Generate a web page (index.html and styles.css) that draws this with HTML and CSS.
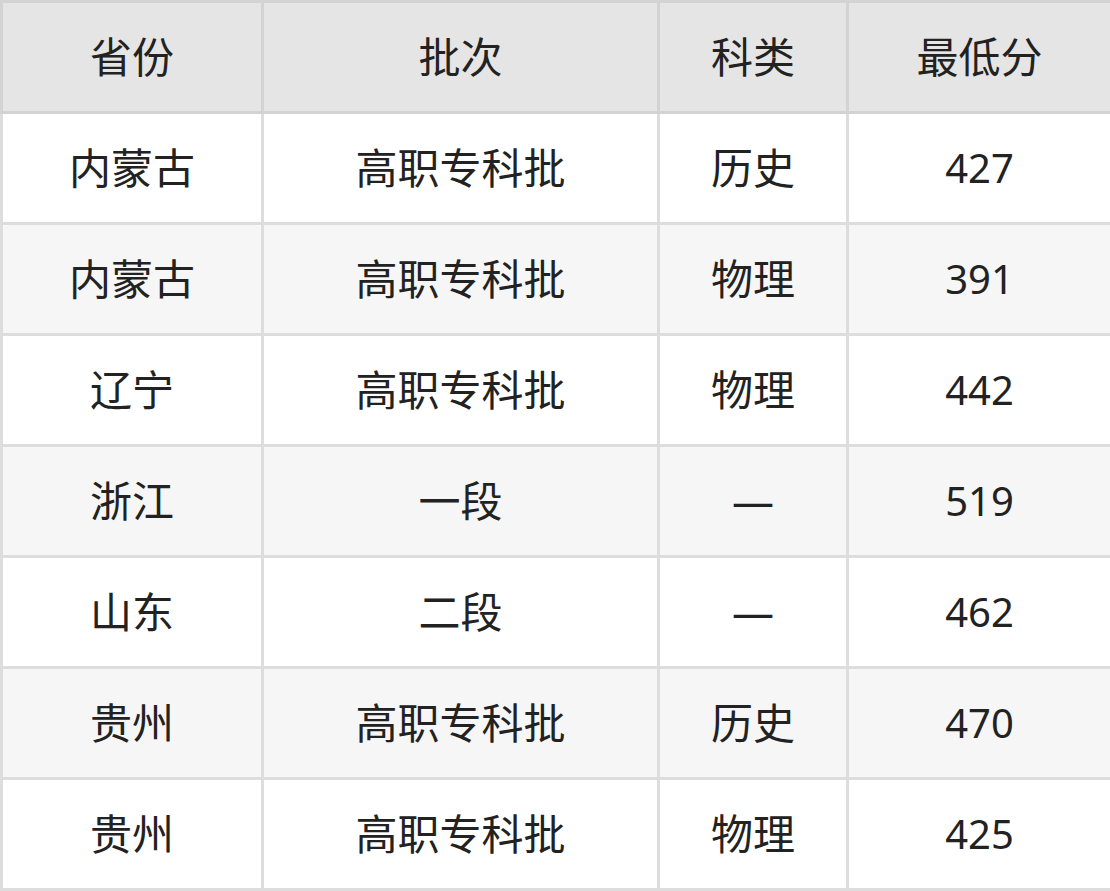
FILE: index.html
```html
<!DOCTYPE html>
<html lang="zh">
<head>
<meta charset="utf-8">
<link rel="stylesheet" href="styles.css">
</head>
<body>
<table class="score-table">
  <colgroup>
    <col class="c1"><col class="c2"><col class="c3"><col class="c4">
  </colgroup>
  <thead>
    <tr><th>省份</th><th>批次</th><th>科类</th><th>最低分</th></tr>
  </thead>
  <tbody>
    <tr><td>内蒙古</td><td>高职专科批</td><td>历史</td><td>427</td></tr>
    <tr><td>内蒙古</td><td>高职专科批</td><td>物理</td><td>391</td></tr>
    <tr><td>辽宁</td><td>高职专科批</td><td>物理</td><td>442</td></tr>
    <tr><td>浙江</td><td>一段</td><td>—</td><td>519</td></tr>
    <tr><td>山东</td><td>二段</td><td>—</td><td>462</td></tr>
    <tr><td>贵州</td><td>高职专科批</td><td>历史</td><td>470</td></tr>
    <tr><td>贵州</td><td>高职专科批</td><td>物理</td><td>425</td></tr>
  </tbody>
</table>
</body>
</html>
```

FILE: styles.css
```css
html, body {
  margin: 0;
  padding: 0;
  background: #ffffff;
}

.score-table {
  border-collapse: collapse;
  table-layout: fixed;
  width: 1110px;
  font-family: "Noto Sans", "Noto Sans CJK SC", sans-serif;
  font-size: 42px;
  color: #222222;
}

.c1 { width: 261px; }
.c2 { width: 396px; }
.c3 { width: 189px; }
.c4 { width: 264px; }

.score-table th,
.score-table td {
  border: 3px solid #dddddd;
  height: 111px;
  padding: 0;
  text-align: center;
  vertical-align: middle;
  line-height: 1;
  font-weight: 400;
  box-sizing: border-box;
}

.score-table td:last-child {
  font-size: 40px;
}

.score-table th {
  background: #e5e5e5;
  border-color: #d3d3d3;
}

.score-table tbody tr:nth-child(odd) td {
  background: #ffffff;
}

.score-table tbody tr:nth-child(even) td {
  background: #f6f6f6;
}
```
